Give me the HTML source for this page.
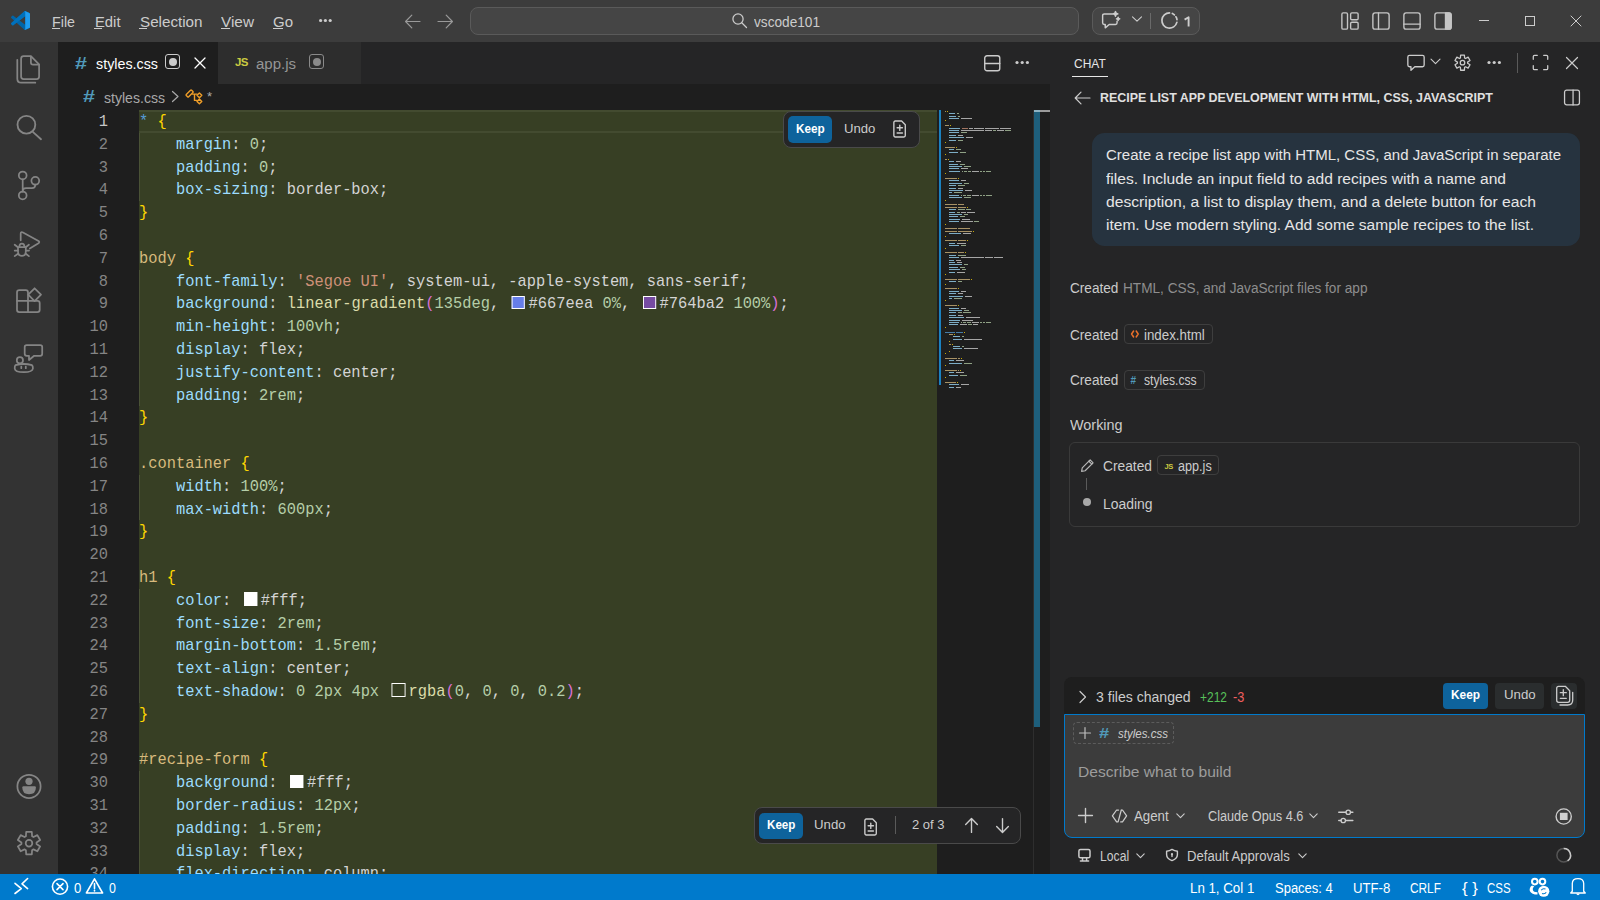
<!DOCTYPE html><html><head><meta charset="utf-8"><style>
*{margin:0;padding:0;box-sizing:border-box}
html,body{width:1600px;height:900px;overflow:hidden;background:#1e1e1e;font-family:"Liberation Sans", sans-serif;color:#cccccc}
.a{position:absolute}
.t{position:absolute;white-space:pre;line-height:1}
svg{position:absolute;overflow:visible}
.code{position:absolute;left:139px;white-space:pre;font-family:"Liberation Mono", monospace;font-size:16.4px;line-height:22.8px;height:22.8px;color:#d4d4d4;transform:scaleX(0.9386);transform-origin:0 0}
.ln{position:absolute;left:58px;width:50px;text-align:right;font-family:"Liberation Mono", monospace;font-size:16.4px;line-height:22.8px;color:#858585;transform:scaleX(0.9386);transform-origin:100% 0}
.sw{display:inline-block;width:14.28px;height:13.6px;margin:0 3.62px;border:1.5px solid #fff;border-left-width:1.6px;border-right-width:1.6px;vertical-align:top;position:relative;top:2.6px}
.p{color:#9cdcfe}.n{color:#b5cea8}.s{color:#ce9178}.sel{color:#d7ba7d}.b1{color:#ffd700}.b2{color:#da70d6}.f{color:#dcdcaa}.kw{color:#569cd6}.at{color:#c586c0}
</style></head><body>

<div class="a" style="left:0;top:0;width:1600px;height:42px;background:#3c3c3c"></div>
<svg style="left:11px;top:11px" width="19" height="19" viewBox="0 0 100 100">
<path fill="#0065A9" d="M96.46 10.8 75.86.9a6.23 6.23 0 0 0-7.1 1.2L29.36 38.05 12.19 25.01a4.16 4.16 0 0 0-5.32.24L1.36 30.26a4.16 4.16 0 0 0 0 6.16L16.25 50 1.36 63.58a4.16 4.16 0 0 0 0 6.16l5.51 5.01a4.16 4.16 0 0 0 5.32.24l17.17-13.04 39.4 35.95a6.23 6.23 0 0 0 7.1 1.2l20.6-9.9A6.24 6.24 0 0 0 100 83.6V16.42a6.24 6.24 0 0 0-3.54-5.62ZM75.02 72.7 45.11 50l29.91-22.7v45.4Z"/>
<path fill="#007ACC" d="M96.46 10.8 75.86.9a6.23 6.23 0 0 0-7.1 1.2L1.36 63.58a4.16 4.16 0 0 0 0 6.16l5.51 5.01a4.16 4.16 0 0 0 5.32.24L93.33 13.4C96.03 11.34 100 13.27 100 16.65v-.24a6.24 6.24 0 0 0-3.54-5.61Z" opacity=".6"/>
<path fill="#1F9CF0" d="M75.86 99.1a6.24 6.24 0 0 1-7.1-1.2C71.07 100.2 75 98.56 75 95.3V4.7c0-3.26-3.93-4.89-6.24-2.59a6.23 6.23 0 0 1 7.1-1.2l20.6 9.9A6.24 6.24 0 0 1 100 16.42v67.17a6.24 6.24 0 0 1-3.54 5.62l-20.6 9.9Z"/>
</svg>
<div class="t" style="left:52px;top:14.02px;font-size:15.1px;color:#cccccc;font-weight:normal;font-style:normal;font-family:'Liberation Sans', sans-serif;letter-spacing:0px;transform:scaleX(0.9454);transform-origin:0 0;">File</div>
<div class="t" style="left:94.5px;top:14.02px;font-size:15.1px;color:#cccccc;font-weight:normal;font-style:normal;font-family:'Liberation Sans', sans-serif;letter-spacing:0px;transform:scaleX(0.9802);transform-origin:0 0;">Edit</div>
<div class="t" style="left:139.5px;top:14.02px;font-size:15.1px;color:#cccccc;font-weight:normal;font-style:normal;font-family:'Liberation Sans', sans-serif;letter-spacing:0px;transform:scaleX(1.0065);transform-origin:0 0;">Selection</div>
<div class="t" style="left:221px;top:14.02px;font-size:15.1px;color:#cccccc;font-weight:normal;font-style:normal;font-family:'Liberation Sans', sans-serif;letter-spacing:0px;transform:scaleX(1.0169);transform-origin:0 0;">View</div>
<div class="t" style="left:273px;top:14.02px;font-size:15.1px;color:#cccccc;font-weight:normal;font-style:normal;font-family:'Liberation Sans', sans-serif;letter-spacing:0px;transform:scaleX(0.9930);transform-origin:0 0;">Go</div>
<div class="a" style="left:52px;top:28px;width:8px;height:1px;background:#cccccc;"></div>
<div class="a" style="left:94px;top:28px;width:8px;height:1px;background:#cccccc;"></div>
<div class="a" style="left:139px;top:28px;width:8px;height:1px;background:#cccccc;"></div>
<div class="a" style="left:221px;top:28px;width:9px;height:1px;background:#cccccc;"></div>
<div class="a" style="left:273px;top:28px;width:10px;height:1px;background:#cccccc;"></div>
<svg style="left:0;top:0" width="1" height="1"><circle cx="320.6" cy="20.5" r="1.6" fill="#cccccc"/><circle cx="325.4" cy="20.5" r="1.6" fill="#cccccc"/><circle cx="330.2" cy="20.5" r="1.6" fill="#cccccc"/></svg>
<svg style="left:404px;top:13px;" width="18" height="17" viewBox="0 0 18 17" fill="none" stroke="#9a9a9a" stroke-width="1.2" stroke-linecap="round" stroke-linejoin="round"><path d="M16 8.5H2M7.8 2.2 1.6 8.5 7.8 14.8"/></svg>
<svg style="left:436px;top:13px;" width="18" height="17" viewBox="0 0 18 17" fill="none" stroke="#9a9a9a" stroke-width="1.2" stroke-linecap="round" stroke-linejoin="round"><path d="M2 8.5H16M10.2 2.2 16.4 8.5 10.2 14.8"/></svg>
<div class="a" style="left:470px;top:7px;width:609px;height:28px;background:#454545;border:1px solid #5a5a5a;border-radius:8px"></div>
<svg style="left:731px;top:12px;" width="17" height="17" viewBox="0 0 16 16" fill="none" stroke="#cccccc" stroke-width="1.2" stroke-linecap="round" stroke-linejoin="round"><circle cx="6.6" cy="6.6" r="4.8"/><path d="M10.1 10.1 14.6 14.6"/></svg>
<div class="t" style="left:754px;top:14.95px;font-size:14.0px;color:#cccccc;font-weight:normal;font-style:normal;font-family:'Liberation Sans', sans-serif;letter-spacing:0px;transform:scaleX(0.9746);transform-origin:0 0;">vscode101</div>
<div class="a" style="left:1092px;top:7px;width:108px;height:28px;background:#454545;border:1px solid #5a5a5a;border-radius:8px"></div>
<svg style="left:1100px;top:10px;" width="21" height="21" viewBox="0 0 16 16" fill="none" stroke="#cccccc" stroke-width="1.1" stroke-linecap="round" stroke-linejoin="round"><path d="M9.5 3H3.2C2.5 3 2 3.5 2 4.2v5.6c0 .7.5 1.2 1.2 1.2H4v2.6L7 11h4.8c.7 0 1.2-.5 1.2-1.2V8.5"/><path d="M11.8 1.2l.5 1.3 1.3.5-1.3.5-.5 1.3-.5-1.3-1.3-.5 1.3-.5z" fill="#cccccc"/><path d="M13.8 5.5l.35.9.9.35-.9.35-.35.9-.35-.9-.9-.35.9-.35z" fill="#cccccc"/></svg>
<svg style="left:1131px;top:15px;" width="12" height="8" viewBox="0 0 12 8" fill="none" stroke="#cccccc" stroke-width="1.1" stroke-linecap="round" stroke-linejoin="round"><path d="M1.5 1.8 6 6.2l4.5-4.4"/></svg>
<div class="a" style="left:1150px;top:13px;width:1px;height:16px;background:#6a6a6a;"></div>
<svg style="left:1160px;top:11px;" width="19" height="19" viewBox="0 0 16 16" fill="none" stroke="#cccccc" stroke-width="1.45" stroke-linecap="round" stroke-linejoin="round"><path d="M8 1.6A6.4 6.4 0 1 0 14.2 9.6"/><path d="M10.4 2.1a6.4 6.4 0 0 1 1.7 1.1M13.4 4.9c.5.7.8 1.5.9 2.3"/></svg>
<svg style="left:1180px;top:10px" width="14" height="22"><path d="M4.6 9.6 8.6 7.2V16.4" fill="none" stroke="#cccccc" stroke-width="1.9" stroke-linejoin="round"/></svg>
<svg style="left:1340px;top:11px;" width="20" height="20" viewBox="0 0 16 16" fill="none" stroke="#c5c5c5" stroke-width="1.1" stroke-linecap="round" stroke-linejoin="round"><rect x="1.5" y="1.5" width="4.5" height="13" rx="1"/><rect x="8.5" y="1.5" width="6" height="5.5" rx="1"/><rect x="8.5" y="9" width="6" height="5.5" rx="1"/></svg>
<svg style="left:1371px;top:11px;" width="20" height="20" viewBox="0 0 16 16" fill="none" stroke="#c5c5c5" stroke-width="1.1" stroke-linecap="round" stroke-linejoin="round"><rect x="1.5" y="1.5" width="13" height="13" rx="1.8"/><path d="M6 1.5v13"/></svg>
<svg style="left:1402px;top:11px;" width="20" height="20" viewBox="0 0 16 16" fill="none" stroke="#c5c5c5" stroke-width="1.1" stroke-linecap="round" stroke-linejoin="round"><rect x="1.5" y="1.5" width="13" height="13" rx="1.8"/><path d="M1.5 10.5h13"/></svg>
<svg style="left:1433px;top:11px;" width="20" height="20" viewBox="0 0 16 16" fill="none" stroke="#c5c5c5" stroke-width="1.1" stroke-linecap="round" stroke-linejoin="round"><rect x="1.5" y="1.5" width="13" height="13" rx="1.8"/><path d="M10 1.5h2.7c1 0 1.8.8 1.8 1.8v9.4c0 1-.8 1.8-1.8 1.8H10z" fill="#c5c5c5"/></svg>
<div class="a" style="left:1479px;top:20px;width:10px;height:1px;background:#cccccc;"></div>
<div class="a" style="left:1525px;top:16px;width:10px;height:10px;background:transparent;border:1px solid #cccccc"></div>
<svg style="left:1571px;top:16px;" width="10" height="10" viewBox="0 0 10 10" fill="none" stroke="#cccccc" stroke-width="1.0" stroke-linecap="round" stroke-linejoin="round"><path d="M0 0 10 10M10 0 0 10"/></svg>
<div class="a" style="left:0px;top:42px;width:58px;height:832px;background:#333333;"></div>
<svg style="left:10px;top:50px;" width="40" height="40" viewBox="0 0 40 40" fill="none" stroke="#858585" stroke-width="1.75" stroke-linecap="round" stroke-linejoin="round"><path d="M13.6 6.2H20.9L29.1 14.4V26.6Q29.1 29.1 26.6 29.1H13.6Q11.1 29.1 11.1 26.6V8.7Q11.1 6.2 13.6 6.2Z"/><path d="M20.9 6.5V12.4Q20.9 14.5 23 14.5H28.8"/><path d="M7.3 9.8V28.7Q7.3 32.7 11.3 32.7H25.3"/></svg>
<svg style="left:10px;top:108px;" width="40" height="40" viewBox="0 0 40 40" fill="none" stroke="#858585" stroke-width="1.85" stroke-linecap="round" stroke-linejoin="round"><circle cx="16.4" cy="16.7" r="8.9"/><path d="M23.1 24.1 31 31.2"/></svg>
<svg style="left:10px;top:165px;" width="40" height="40" viewBox="0 0 40 40" fill="none" stroke="#858585" stroke-width="1.75" stroke-linecap="round" stroke-linejoin="round"><circle cx="12.7" cy="10.4" r="3.9"/><circle cx="25.3" cy="15.8" r="3.9"/><circle cx="12.7" cy="30.4" r="3.9"/><path d="M12.7 14.3V26.5M25.3 19.7Q25.3 23.1 22 23.1H16Q12.7 23.1 12.7 26.4"/></svg>
<svg style="left:8px;top:223px;" width="40" height="40" viewBox="0 0 40 40" fill="none" stroke="#858585" stroke-width="1.75" stroke-linecap="round" stroke-linejoin="round"><path d="M12.7 17.3V10.8Q12.7 8.3 15 9.5L30.5 18Q32 19.1 30.5 20.2L21.8 25.6"/><path d="M10 24.2H17.8V28.5Q17.8 32.9 13.9 32.9Q10 32.9 10 28.5Z"/><path d="M11.4 23.8Q11.4 20.6 13.9 20.6Q16.4 20.6 16.4 23.8"/><path d="M6.7 21.8 9.6 24M20.9 21.8 18 24M6.7 27.6H9.8M17.9 27.6H21M6.7 33.1 10 30.7M20.9 33.1 17.8 30.7"/></svg>
<svg style="left:9px;top:280px;" width="40" height="40" viewBox="0 0 40 40" fill="none" stroke="#858585" stroke-width="1.75" stroke-linecap="round" stroke-linejoin="round"><path d="M8 12.5Q8 10.2 10.3 10.2H16.7Q19 10.2 19 12.5V20.9H28.4Q30.7 20.9 30.7 23.2V29.7Q30.7 32 28.4 32H10.3Q8 32 8 29.7Z"/><path d="M8 20.9H19V32"/><path d="M25.6 8.3 32 14.7 25.6 21.1 19.2 14.7Z"/></svg>
<svg style="left:8px;top:338px;" width="40" height="40" viewBox="0 0 40 40" fill="none" stroke="#858585" stroke-width="1.75" stroke-linecap="round" stroke-linejoin="round"><path d="M18.7 7.1H32.2Q34.2 7.1 34.2 9.1V15.8Q34.2 17.8 32.2 17.8H26.2L21 22V17.8H18.7Q16.7 17.8 16.7 15.8V9.1Q16.7 7.1 18.7 7.1Z"/><circle cx="11.9" cy="22.2" r="3.1"/><path d="M7.5 27.2Q15.8 24.8 24 27.2Q25 28 24.9 30.5Q24.5 34.2 15.8 34.2Q7 34.2 6.7 30.5Q6.6 28 7.5 27.2Z"/><path d="M13.3 28.6V30.2M17.8 28.6V30.2"/></svg>
<svg style="left:9px;top:766px;" width="40" height="40" viewBox="0 0 40 40" fill="none" stroke="#858585" stroke-width="1.75" stroke-linecap="round" stroke-linejoin="round"><circle cx="20" cy="20.4" r="11.6"/><circle cx="20" cy="15.3" r="3.6" fill="#858585" stroke="none"/><path d="M13.3 21.5Q13.3 20.2 14.6 20.2H25.6Q26.9 20.2 26.9 21.5Q26.9 28.2 20.1 28.2Q13.3 28.2 13.3 21.5Z" fill="#858585" stroke="none"/></svg>
<svg style="left:9px;top:823px;" width="40" height="40" viewBox="0 0 40 40" fill="none" stroke="#858585" stroke-width="1.75" stroke-linecap="round" stroke-linejoin="round"><path d="M16.91 13.26 L17.19 8.94 L22.81 8.94 L23.09 13.26 L24.47 14.05 L28.34 12.14 L31.15 17.00 L27.56 19.41 L27.56 20.99 L31.15 23.40 L28.34 28.26 L24.47 26.35 L23.09 27.14 L22.81 31.46 L17.19 31.46 L16.91 27.14 L15.53 26.35 L11.66 28.26 L8.85 23.40 L12.44 20.99 L12.44 19.41 L8.85 17.00 L11.66 12.14 L15.53 14.05Z"/><circle cx="20" cy="20.2" r="3.3"/></svg>
<div class="a" style="left:58px;top:42px;width:992px;height:42px;background:#252526;"></div>
<div class="a" style="left:58px;top:42px;width:160px;height:42px;background:#1e1e1e;"></div>
<div class="a" style="left:218px;top:42px;width:143px;height:42px;background:#2d2d2d;"></div>
<div class="t" style="left:74.5px;top:54.53px;font-size:16.5px;color:#519aba;font-weight:bold;font-style:normal;font-family:'Liberation Sans', sans-serif;letter-spacing:0px;transform:scaleX(1.3061);transform-origin:0 0;">#</div>
<div class="t" style="left:96px;top:56.22px;font-size:15.1px;color:#ffffff;font-weight:normal;font-style:normal;font-family:'Liberation Sans', sans-serif;letter-spacing:0px;transform:scaleX(0.9477);transform-origin:0 0;">styles.css</div>
<div class="a" style="left:165px;top:54px;width:15px;height:15px;background:transparent;border:1.3px solid #cccccc;border-radius:3px"></div>
<div class="a" style="left:168.5px;top:57.5px;width:8px;height:8px;background:#cccccc;border-radius:50%"></div>
<svg style="left:194px;top:57px;" width="12" height="12" viewBox="0 0 12 12" fill="none" stroke="#ffffff" stroke-width="1.3" stroke-linecap="round" stroke-linejoin="round"><path d="M1 1 11 11M11 1 1 11"/></svg>
<div class="t" style="left:235px;top:56.77px;font-size:11.5px;color:#cbcb41;font-weight:bold;font-style:normal;font-family:'Liberation Sans', sans-serif;letter-spacing:-0.6px;">JS</div>
<div class="t" style="left:256px;top:56.22px;font-size:15.1px;color:#969696;font-weight:normal;font-style:normal;font-family:'Liberation Sans', sans-serif;letter-spacing:0px;transform:scaleX(0.9930);transform-origin:0 0;">app.js</div>
<div class="a" style="left:309px;top:54px;width:15px;height:15px;background:transparent;border:1.3px solid #8a8a8a;border-radius:3px"></div>
<div class="a" style="left:312.5px;top:57.5px;width:8px;height:8px;background:#8a8a8a;border-radius:50%"></div>
<svg style="left:982.5px;top:53.5px;" width="18.5" height="18.5" viewBox="0 0 16 16" fill="none" stroke="#cccccc" stroke-width="1.2" stroke-linecap="round" stroke-linejoin="round"><rect x="1.5" y="1.5" width="13" height="13" rx="2"/><path d="M1.5 8.2h13"/></svg>
<svg style="left:0;top:0" width="1" height="1"><circle cx="1017" cy="62.5" r="1.6" fill="#cccccc"/><circle cx="1022.2" cy="62.5" r="1.6" fill="#cccccc"/><circle cx="1027.4" cy="62.5" r="1.6" fill="#cccccc"/></svg>
<div class="t" style="left:82.5px;top:88.23px;font-size:16.5px;color:#519aba;font-weight:bold;font-style:normal;font-family:'Liberation Sans', sans-serif;letter-spacing:0px;transform:scaleX(1.3061);transform-origin:0 0;">#</div>
<div class="t" style="left:103.6px;top:89.92px;font-size:15.1px;color:#a9a9a9;font-weight:normal;font-style:normal;font-family:'Liberation Sans', sans-serif;letter-spacing:0px;transform:scaleX(0.9324);transform-origin:0 0;">styles.css</div>
<svg style="left:171px;top:90px;" width="9" height="13" viewBox="0 0 9 13" fill="none" stroke="#a9a9a9" stroke-width="1.2" stroke-linecap="round" stroke-linejoin="round"><path d="M1.5 1.5 7 6.5 1.5 11.5"/></svg>
<svg style="left:182px;top:86px;" width="34" height="22" viewBox="0 0 34 22" fill="none" stroke="#ee9d28" stroke-width="1.4" stroke-linecap="round" stroke-linejoin="round"><rect x="-3.8" y="-1.7" width="7.6" height="3.4" rx="0.8" transform="translate(7.6 7.5) rotate(-45)"/><path d="M10.4 8.1H15M12.5 8.1V14.4H15"/><path d="M17.4 6.9 19.8 9.3 17.4 11.7 15 9.3Z"/><path d="M17.4 13 19.8 15.4 17.4 17.8 15 15.4Z"/></svg>
<div class="t" style="left:207px;top:90.00px;font-size:13px;color:#a9a9a9;font-weight:normal;font-style:normal;font-family:'Liberation Sans', sans-serif;letter-spacing:0px;">*</div>
<div class="a" style="left:139px;top:110px;width:798px;height:764px;background:#373f24;"></div>
<div class="a" style="left:139px;top:110px;width:798px;height:2px;background:#434b30;"></div>
<div class="a" style="left:139px;top:130.8px;width:798px;height:2px;background:#434b30;"></div>
<div class="ln" style="top:110.90px;color:#c6c6c6">1</div>
<div class="code" style="top:110.90px"><span class="kw">*</span> <span class="b1">{</span></div>
<div class="ln" style="top:133.70px;">2</div>
<div class="code" style="top:133.70px">    <span class="p">margin</span>: <span class="n">0</span>;</div>
<div class="a" style="left:139px;top:132.8px;width:1px;height:22.8px;background:#4a5236;"></div>
<div class="ln" style="top:156.50px;">3</div>
<div class="code" style="top:156.50px">    <span class="p">padding</span>: <span class="n">0</span>;</div>
<div class="a" style="left:139px;top:155.6px;width:1px;height:22.8px;background:#4a5236;"></div>
<div class="ln" style="top:179.30px;">4</div>
<div class="code" style="top:179.30px">    <span class="p">box-sizing</span>: border-box;</div>
<div class="a" style="left:139px;top:178.4px;width:1px;height:22.8px;background:#4a5236;"></div>
<div class="ln" style="top:202.10px;">5</div>
<div class="code" style="top:202.10px"><span class="b1">}</span></div>
<div class="ln" style="top:224.90px;">6</div>
<div class="code" style="top:224.90px"></div>
<div class="ln" style="top:247.70px;">7</div>
<div class="code" style="top:247.70px"><span class="sel">body</span> <span class="b1">{</span></div>
<div class="ln" style="top:270.50px;">8</div>
<div class="code" style="top:270.50px">    <span class="p">font-family</span>: <span class="s">'Segoe UI'</span>, system-ui, -apple-system, sans-serif;</div>
<div class="a" style="left:139px;top:269.6px;width:1px;height:22.8px;background:#4a5236;"></div>
<div class="ln" style="top:293.30px;">9</div>
<div class="code" style="top:293.30px">    <span class="p">background</span>: <span class="f">linear-gradient</span><span class="b2">(</span><span class="n">135deg</span>, <span class="sw" style="background:#667eea"></span>#667eea <span class="n">0%</span>, <span class="sw" style="background:#764ba2"></span>#764ba2 <span class="n">100%</span><span class="b2">)</span>;</div>
<div class="a" style="left:139px;top:292.4px;width:1px;height:22.8px;background:#4a5236;"></div>
<div class="ln" style="top:316.10px;">10</div>
<div class="code" style="top:316.10px">    <span class="p">min-height</span>: <span class="n">100vh</span>;</div>
<div class="a" style="left:139px;top:315.20000000000005px;width:1px;height:22.8px;background:#4a5236;"></div>
<div class="ln" style="top:338.90px;">11</div>
<div class="code" style="top:338.90px">    <span class="p">display</span>: flex;</div>
<div class="a" style="left:139px;top:338.0px;width:1px;height:22.8px;background:#4a5236;"></div>
<div class="ln" style="top:361.70px;">12</div>
<div class="code" style="top:361.70px">    <span class="p">justify-content</span>: center;</div>
<div class="a" style="left:139px;top:360.8px;width:1px;height:22.8px;background:#4a5236;"></div>
<div class="ln" style="top:384.50px;">13</div>
<div class="code" style="top:384.50px">    <span class="p">padding</span>: <span class="n">2rem</span>;</div>
<div class="a" style="left:139px;top:383.6px;width:1px;height:22.8px;background:#4a5236;"></div>
<div class="ln" style="top:407.30px;">14</div>
<div class="code" style="top:407.30px"><span class="b1">}</span></div>
<div class="ln" style="top:430.10px;">15</div>
<div class="code" style="top:430.10px"></div>
<div class="ln" style="top:452.90px;">16</div>
<div class="code" style="top:452.90px"><span class="sel">.container</span> <span class="b1">{</span></div>
<div class="ln" style="top:475.70px;">17</div>
<div class="code" style="top:475.70px">    <span class="p">width</span>: <span class="n">100%</span>;</div>
<div class="a" style="left:139px;top:474.8px;width:1px;height:22.8px;background:#4a5236;"></div>
<div class="ln" style="top:498.50px;">18</div>
<div class="code" style="top:498.50px">    <span class="p">max-width</span>: <span class="n">600px</span>;</div>
<div class="a" style="left:139px;top:497.6px;width:1px;height:22.8px;background:#4a5236;"></div>
<div class="ln" style="top:521.30px;">19</div>
<div class="code" style="top:521.30px"><span class="b1">}</span></div>
<div class="ln" style="top:544.10px;">20</div>
<div class="code" style="top:544.10px"></div>
<div class="ln" style="top:566.90px;">21</div>
<div class="code" style="top:566.90px"><span class="sel">h1</span> <span class="b1">{</span></div>
<div class="ln" style="top:589.70px;">22</div>
<div class="code" style="top:589.70px">    <span class="p">color</span>: <span class="sw" style="background:#ffffff"></span>#fff;</div>
<div class="a" style="left:139px;top:588.8px;width:1px;height:22.8px;background:#4a5236;"></div>
<div class="ln" style="top:612.50px;">23</div>
<div class="code" style="top:612.50px">    <span class="p">font-size</span>: <span class="n">2rem</span>;</div>
<div class="a" style="left:139px;top:611.6px;width:1px;height:22.8px;background:#4a5236;"></div>
<div class="ln" style="top:635.30px;">24</div>
<div class="code" style="top:635.30px">    <span class="p">margin-bottom</span>: <span class="n">1.5rem</span>;</div>
<div class="a" style="left:139px;top:634.4px;width:1px;height:22.8px;background:#4a5236;"></div>
<div class="ln" style="top:658.10px;">25</div>
<div class="code" style="top:658.10px">    <span class="p">text-align</span>: center;</div>
<div class="a" style="left:139px;top:657.2px;width:1px;height:22.8px;background:#4a5236;"></div>
<div class="ln" style="top:680.90px;">26</div>
<div class="code" style="top:680.90px">    <span class="p">text-shadow</span>: <span class="n">0</span> <span class="n">2px</span> <span class="n">4px</span> <span class="sw" style="background:transparent"></span><span class="f">rgba</span><span class="b2">(</span><span class="n">0</span>, <span class="n">0</span>, <span class="n">0</span>, <span class="n">0.2</span><span class="b2">)</span>;</div>
<div class="a" style="left:139px;top:680.0px;width:1px;height:22.8px;background:#4a5236;"></div>
<div class="ln" style="top:703.70px;">27</div>
<div class="code" style="top:703.70px"><span class="b1">}</span></div>
<div class="ln" style="top:726.50px;">28</div>
<div class="code" style="top:726.50px"></div>
<div class="ln" style="top:749.30px;">29</div>
<div class="code" style="top:749.30px"><span class="sel">#recipe-form</span> <span class="b1">{</span></div>
<div class="ln" style="top:772.10px;">30</div>
<div class="code" style="top:772.10px">    <span class="p">background</span>: <span class="sw" style="background:#ffffff"></span>#fff;</div>
<div class="a" style="left:139px;top:771.2px;width:1px;height:22.8px;background:#4a5236;"></div>
<div class="ln" style="top:794.90px;">31</div>
<div class="code" style="top:794.90px">    <span class="p">border-radius</span>: <span class="n">12px</span>;</div>
<div class="a" style="left:139px;top:794.0px;width:1px;height:22.8px;background:#4a5236;"></div>
<div class="ln" style="top:817.70px;">32</div>
<div class="code" style="top:817.70px">    <span class="p">padding</span>: <span class="n">1.5rem</span>;</div>
<div class="a" style="left:139px;top:816.8000000000001px;width:1px;height:22.8px;background:#4a5236;"></div>
<div class="ln" style="top:840.50px;">33</div>
<div class="code" style="top:840.50px">    <span class="p">display</span>: flex;</div>
<div class="a" style="left:139px;top:839.6px;width:1px;height:22.8px;background:#4a5236;"></div>
<div class="ln" style="top:863.30px;">34</div>
<div class="code" style="top:863.30px">    <span class="p">flex-direction</span>: column;</div>
<div class="a" style="left:139px;top:862.4px;width:1px;height:22.8px;background:#4a5236;"></div>
<div class="a" style="left:937px;top:110px;width:97px;height:764px;background:#1e1e1e;"></div>
<div class="a" style="left:945px;top:111px;width:1px;height:1.4px;background:#d7ba7d;opacity:.75"></div><div class="a" style="left:947px;top:111px;width:1px;height:1.4px;background:#ffd700;opacity:.75"></div><div class="a" style="left:949px;top:113px;width:6px;height:1.4px;background:#9cdcfe;opacity:.75"></div><div class="a" style="left:957px;top:113px;width:2px;height:1.4px;background:#b5cea8;opacity:.75"></div><div class="a" style="left:949px;top:116px;width:7px;height:1.4px;background:#9cdcfe;opacity:.75"></div><div class="a" style="left:958px;top:116px;width:2px;height:1.4px;background:#b5cea8;opacity:.75"></div><div class="a" style="left:949px;top:118px;width:10px;height:1.4px;background:#9cdcfe;opacity:.75"></div><div class="a" style="left:961px;top:118px;width:11px;height:1.4px;background:#d4d4d4;opacity:.75"></div><div class="a" style="left:945px;top:120px;width:1px;height:1.4px;background:#ffd700;opacity:.75"></div><div class="a" style="left:945px;top:125px;width:4px;height:1.4px;background:#d7ba7d;opacity:.75"></div><div class="a" style="left:950px;top:125px;width:1px;height:1.4px;background:#ffd700;opacity:.75"></div><div class="a" style="left:949px;top:128px;width:11px;height:1.4px;background:#9cdcfe;opacity:.75"></div><div class="a" style="left:962px;top:128px;width:6px;height:1.4px;background:#ce9178;opacity:.75"></div><div class="a" style="left:969px;top:128px;width:4px;height:1.4px;background:#d4d4d4;opacity:.75"></div><div class="a" style="left:974px;top:128px;width:10px;height:1.4px;background:#d4d4d4;opacity:.75"></div><div class="a" style="left:985px;top:128px;width:14px;height:1.4px;background:#d4d4d4;opacity:.75"></div><div class="a" style="left:1000px;top:128px;width:11px;height:1.4px;background:#d4d4d4;opacity:.75"></div><div class="a" style="left:949px;top:130px;width:10px;height:1.4px;background:#9cdcfe;opacity:.75"></div><div class="a" style="left:961px;top:130px;width:23px;height:1.4px;background:#d4d4d4;opacity:.75"></div><div class="a" style="left:985px;top:130px;width:7px;height:1.4px;background:#d4d4d4;opacity:.75"></div><div class="a" style="left:993px;top:130px;width:3px;height:1.4px;background:#b5cea8;opacity:.75"></div><div class="a" style="left:997px;top:130px;width:7px;height:1.4px;background:#d4d4d4;opacity:.75"></div><div class="a" style="left:1005px;top:130px;width:6px;height:1.4px;background:#b5cea8;opacity:.75"></div><div class="a" style="left:949px;top:132px;width:10px;height:1.4px;background:#9cdcfe;opacity:.75"></div><div class="a" style="left:961px;top:132px;width:6px;height:1.4px;background:#b5cea8;opacity:.75"></div><div class="a" style="left:949px;top:135px;width:7px;height:1.4px;background:#9cdcfe;opacity:.75"></div><div class="a" style="left:958px;top:135px;width:5px;height:1.4px;background:#d4d4d4;opacity:.75"></div><div class="a" style="left:949px;top:137px;width:15px;height:1.4px;background:#9cdcfe;opacity:.75"></div><div class="a" style="left:966px;top:137px;width:7px;height:1.4px;background:#d4d4d4;opacity:.75"></div><div class="a" style="left:949px;top:140px;width:7px;height:1.4px;background:#9cdcfe;opacity:.75"></div><div class="a" style="left:958px;top:140px;width:5px;height:1.4px;background:#b5cea8;opacity:.75"></div><div class="a" style="left:945px;top:142px;width:1px;height:1.4px;background:#ffd700;opacity:.75"></div><div class="a" style="left:945px;top:147px;width:10px;height:1.4px;background:#d7ba7d;opacity:.75"></div><div class="a" style="left:956px;top:147px;width:1px;height:1.4px;background:#ffd700;opacity:.75"></div><div class="a" style="left:949px;top:149px;width:5px;height:1.4px;background:#9cdcfe;opacity:.75"></div><div class="a" style="left:956px;top:149px;width:5px;height:1.4px;background:#b5cea8;opacity:.75"></div><div class="a" style="left:949px;top:152px;width:9px;height:1.4px;background:#9cdcfe;opacity:.75"></div><div class="a" style="left:960px;top:152px;width:6px;height:1.4px;background:#b5cea8;opacity:.75"></div><div class="a" style="left:945px;top:154px;width:1px;height:1.4px;background:#ffd700;opacity:.75"></div><div class="a" style="left:945px;top:159px;width:2px;height:1.4px;background:#d7ba7d;opacity:.75"></div><div class="a" style="left:948px;top:159px;width:1px;height:1.4px;background:#ffd700;opacity:.75"></div><div class="a" style="left:949px;top:161px;width:5px;height:1.4px;background:#9cdcfe;opacity:.75"></div><div class="a" style="left:956px;top:161px;width:5px;height:1.4px;background:#d4d4d4;opacity:.75"></div><div class="a" style="left:949px;top:164px;width:9px;height:1.4px;background:#9cdcfe;opacity:.75"></div><div class="a" style="left:960px;top:164px;width:5px;height:1.4px;background:#b5cea8;opacity:.75"></div><div class="a" style="left:949px;top:166px;width:13px;height:1.4px;background:#9cdcfe;opacity:.75"></div><div class="a" style="left:964px;top:166px;width:7px;height:1.4px;background:#b5cea8;opacity:.75"></div><div class="a" style="left:949px;top:168px;width:10px;height:1.4px;background:#9cdcfe;opacity:.75"></div><div class="a" style="left:961px;top:168px;width:7px;height:1.4px;background:#d4d4d4;opacity:.75"></div><div class="a" style="left:949px;top:171px;width:11px;height:1.4px;background:#9cdcfe;opacity:.75"></div><div class="a" style="left:962px;top:171px;width:1px;height:1.4px;background:#b5cea8;opacity:.75"></div><div class="a" style="left:964px;top:171px;width:3px;height:1.4px;background:#b5cea8;opacity:.75"></div><div class="a" style="left:968px;top:171px;width:3px;height:1.4px;background:#b5cea8;opacity:.75"></div><div class="a" style="left:972px;top:171px;width:7px;height:1.4px;background:#d4d4d4;opacity:.75"></div><div class="a" style="left:980px;top:171px;width:2px;height:1.4px;background:#b5cea8;opacity:.75"></div><div class="a" style="left:983px;top:171px;width:2px;height:1.4px;background:#b5cea8;opacity:.75"></div><div class="a" style="left:986px;top:171px;width:5px;height:1.4px;background:#b5cea8;opacity:.75"></div><div class="a" style="left:945px;top:173px;width:1px;height:1.4px;background:#ffd700;opacity:.75"></div><div class="a" style="left:945px;top:178px;width:12px;height:1.4px;background:#d7ba7d;opacity:.75"></div><div class="a" style="left:958px;top:178px;width:1px;height:1.4px;background:#ffd700;opacity:.75"></div><div class="a" style="left:949px;top:180px;width:10px;height:1.4px;background:#9cdcfe;opacity:.75"></div><div class="a" style="left:961px;top:180px;width:5px;height:1.4px;background:#d4d4d4;opacity:.75"></div><div class="a" style="left:949px;top:183px;width:13px;height:1.4px;background:#9cdcfe;opacity:.75"></div><div class="a" style="left:964px;top:183px;width:5px;height:1.4px;background:#b5cea8;opacity:.75"></div><div class="a" style="left:949px;top:185px;width:7px;height:1.4px;background:#9cdcfe;opacity:.75"></div><div class="a" style="left:958px;top:185px;width:7px;height:1.4px;background:#b5cea8;opacity:.75"></div><div class="a" style="left:949px;top:188px;width:7px;height:1.4px;background:#9cdcfe;opacity:.75"></div><div class="a" style="left:958px;top:188px;width:5px;height:1.4px;background:#d4d4d4;opacity:.75"></div><div class="a" style="left:949px;top:190px;width:14px;height:1.4px;background:#9cdcfe;opacity:.75"></div><div class="a" style="left:965px;top:190px;width:7px;height:1.4px;background:#d4d4d4;opacity:.75"></div><div class="a" style="left:949px;top:192px;width:3px;height:1.4px;background:#9cdcfe;opacity:.75"></div><div class="a" style="left:954px;top:192px;width:8px;height:1.4px;background:#b5cea8;opacity:.75"></div><div class="a" style="left:949px;top:195px;width:10px;height:1.4px;background:#9cdcfe;opacity:.75"></div><div class="a" style="left:961px;top:195px;width:1px;height:1.4px;background:#b5cea8;opacity:.75"></div><div class="a" style="left:963px;top:195px;width:3px;height:1.4px;background:#b5cea8;opacity:.75"></div><div class="a" style="left:967px;top:195px;width:4px;height:1.4px;background:#b5cea8;opacity:.75"></div><div class="a" style="left:972px;top:195px;width:7px;height:1.4px;background:#d4d4d4;opacity:.75"></div><div class="a" style="left:980px;top:195px;width:2px;height:1.4px;background:#b5cea8;opacity:.75"></div><div class="a" style="left:983px;top:195px;width:2px;height:1.4px;background:#b5cea8;opacity:.75"></div><div class="a" style="left:986px;top:195px;width:6px;height:1.4px;background:#b5cea8;opacity:.75"></div><div class="a" style="left:949px;top:197px;width:13px;height:1.4px;background:#9cdcfe;opacity:.75"></div><div class="a" style="left:964px;top:197px;width:7px;height:1.4px;background:#b5cea8;opacity:.75"></div><div class="a" style="left:945px;top:200px;width:1px;height:1.4px;background:#ffd700;opacity:.75"></div><div class="a" style="left:945px;top:204px;width:12px;height:1.4px;background:#d7ba7d;opacity:.75"></div><div class="a" style="left:958px;top:204px;width:6px;height:1.4px;background:#d7ba7d;opacity:.75"></div><div class="a" style="left:945px;top:207px;width:12px;height:1.4px;background:#d7ba7d;opacity:.75"></div><div class="a" style="left:958px;top:207px;width:8px;height:1.4px;background:#d7ba7d;opacity:.75"></div><div class="a" style="left:967px;top:207px;width:1px;height:1.4px;background:#ffd700;opacity:.75"></div><div class="a" style="left:949px;top:209px;width:7px;height:1.4px;background:#9cdcfe;opacity:.75"></div><div class="a" style="left:958px;top:209px;width:7px;height:1.4px;background:#b5cea8;opacity:.75"></div><div class="a" style="left:966px;top:209px;width:5px;height:1.4px;background:#b5cea8;opacity:.75"></div><div class="a" style="left:949px;top:212px;width:6px;height:1.4px;background:#9cdcfe;opacity:.75"></div><div class="a" style="left:957px;top:212px;width:3px;height:1.4px;background:#b5cea8;opacity:.75"></div><div class="a" style="left:961px;top:212px;width:5px;height:1.4px;background:#d4d4d4;opacity:.75"></div><div class="a" style="left:967px;top:212px;width:8px;height:1.4px;background:#d4d4d4;opacity:.75"></div><div class="a" style="left:949px;top:214px;width:13px;height:1.4px;background:#9cdcfe;opacity:.75"></div><div class="a" style="left:964px;top:214px;width:4px;height:1.4px;background:#b5cea8;opacity:.75"></div><div class="a" style="left:949px;top:216px;width:9px;height:1.4px;background:#9cdcfe;opacity:.75"></div><div class="a" style="left:960px;top:216px;width:5px;height:1.4px;background:#b5cea8;opacity:.75"></div><div class="a" style="left:949px;top:219px;width:11px;height:1.4px;background:#9cdcfe;opacity:.75"></div><div class="a" style="left:962px;top:219px;width:8px;height:1.4px;background:#d4d4d4;opacity:.75"></div><div class="a" style="left:949px;top:221px;width:10px;height:1.4px;background:#9cdcfe;opacity:.75"></div><div class="a" style="left:961px;top:221px;width:12px;height:1.4px;background:#d4d4d4;opacity:.75"></div><div class="a" style="left:974px;top:221px;width:5px;height:1.4px;background:#b5cea8;opacity:.75"></div><div class="a" style="left:945px;top:224px;width:1px;height:1.4px;background:#ffd700;opacity:.75"></div><div class="a" style="left:945px;top:228px;width:12px;height:1.4px;background:#d7ba7d;opacity:.75"></div><div class="a" style="left:958px;top:228px;width:12px;height:1.4px;background:#d7ba7d;opacity:.75"></div><div class="a" style="left:945px;top:231px;width:12px;height:1.4px;background:#d7ba7d;opacity:.75"></div><div class="a" style="left:958px;top:231px;width:14px;height:1.4px;background:#d7ba7d;opacity:.75"></div><div class="a" style="left:973px;top:231px;width:1px;height:1.4px;background:#ffd700;opacity:.75"></div><div class="a" style="left:949px;top:233px;width:12px;height:1.4px;background:#9cdcfe;opacity:.75"></div><div class="a" style="left:963px;top:233px;width:8px;height:1.4px;background:#d4d4d4;opacity:.75"></div><div class="a" style="left:945px;top:236px;width:1px;height:1.4px;background:#ffd700;opacity:.75"></div><div class="a" style="left:945px;top:240px;width:12px;height:1.4px;background:#d7ba7d;opacity:.75"></div><div class="a" style="left:958px;top:240px;width:8px;height:1.4px;background:#d7ba7d;opacity:.75"></div><div class="a" style="left:967px;top:240px;width:1px;height:1.4px;background:#ffd700;opacity:.75"></div><div class="a" style="left:949px;top:243px;width:6px;height:1.4px;background:#9cdcfe;opacity:.75"></div><div class="a" style="left:957px;top:243px;width:9px;height:1.4px;background:#d4d4d4;opacity:.75"></div><div class="a" style="left:949px;top:245px;width:10px;height:1.4px;background:#9cdcfe;opacity:.75"></div><div class="a" style="left:961px;top:245px;width:5px;height:1.4px;background:#b5cea8;opacity:.75"></div><div class="a" style="left:945px;top:248px;width:1px;height:1.4px;background:#ffd700;opacity:.75"></div><div class="a" style="left:945px;top:252px;width:12px;height:1.4px;background:#d7ba7d;opacity:.75"></div><div class="a" style="left:958px;top:252px;width:6px;height:1.4px;background:#d7ba7d;opacity:.75"></div><div class="a" style="left:965px;top:252px;width:1px;height:1.4px;background:#ffd700;opacity:.75"></div><div class="a" style="left:949px;top:255px;width:7px;height:1.4px;background:#9cdcfe;opacity:.75"></div><div class="a" style="left:958px;top:255px;width:8px;height:1.4px;background:#b5cea8;opacity:.75"></div><div class="a" style="left:949px;top:257px;width:10px;height:1.4px;background:#9cdcfe;opacity:.75"></div><div class="a" style="left:961px;top:257px;width:23px;height:1.4px;background:#d4d4d4;opacity:.75"></div><div class="a" style="left:985px;top:257px;width:8px;height:1.4px;background:#d4d4d4;opacity:.75"></div><div class="a" style="left:994px;top:257px;width:9px;height:1.4px;background:#d4d4d4;opacity:.75"></div><div class="a" style="left:949px;top:260px;width:5px;height:1.4px;background:#9cdcfe;opacity:.75"></div><div class="a" style="left:956px;top:260px;width:5px;height:1.4px;background:#d4d4d4;opacity:.75"></div><div class="a" style="left:949px;top:262px;width:6px;height:1.4px;background:#9cdcfe;opacity:.75"></div><div class="a" style="left:957px;top:262px;width:5px;height:1.4px;background:#d4d4d4;opacity:.75"></div><div class="a" style="left:949px;top:264px;width:13px;height:1.4px;background:#9cdcfe;opacity:.75"></div><div class="a" style="left:964px;top:264px;width:4px;height:1.4px;background:#b5cea8;opacity:.75"></div><div class="a" style="left:949px;top:267px;width:9px;height:1.4px;background:#9cdcfe;opacity:.75"></div><div class="a" style="left:960px;top:267px;width:5px;height:1.4px;background:#b5cea8;opacity:.75"></div><div class="a" style="left:949px;top:269px;width:11px;height:1.4px;background:#9cdcfe;opacity:.75"></div><div class="a" style="left:962px;top:269px;width:4px;height:1.4px;background:#b5cea8;opacity:.75"></div><div class="a" style="left:949px;top:272px;width:6px;height:1.4px;background:#9cdcfe;opacity:.75"></div><div class="a" style="left:957px;top:272px;width:8px;height:1.4px;background:#d4d4d4;opacity:.75"></div><div class="a" style="left:945px;top:274px;width:1px;height:1.4px;background:#ffd700;opacity:.75"></div><div class="a" style="left:945px;top:279px;width:12px;height:1.4px;background:#d7ba7d;opacity:.75"></div><div class="a" style="left:958px;top:279px;width:12px;height:1.4px;background:#d7ba7d;opacity:.75"></div><div class="a" style="left:971px;top:279px;width:1px;height:1.4px;background:#ffd700;opacity:.75"></div><div class="a" style="left:949px;top:281px;width:7px;height:1.4px;background:#9cdcfe;opacity:.75"></div><div class="a" style="left:958px;top:281px;width:4px;height:1.4px;background:#b5cea8;opacity:.75"></div><div class="a" style="left:945px;top:284px;width:1px;height:1.4px;background:#ffd700;opacity:.75"></div><div class="a" style="left:945px;top:288px;width:12px;height:1.4px;background:#d7ba7d;opacity:.75"></div><div class="a" style="left:958px;top:288px;width:1px;height:1.4px;background:#ffd700;opacity:.75"></div><div class="a" style="left:949px;top:291px;width:10px;height:1.4px;background:#9cdcfe;opacity:.75"></div><div class="a" style="left:961px;top:291px;width:5px;height:1.4px;background:#d4d4d4;opacity:.75"></div><div class="a" style="left:949px;top:293px;width:7px;height:1.4px;background:#9cdcfe;opacity:.75"></div><div class="a" style="left:958px;top:293px;width:5px;height:1.4px;background:#d4d4d4;opacity:.75"></div><div class="a" style="left:949px;top:296px;width:14px;height:1.4px;background:#9cdcfe;opacity:.75"></div><div class="a" style="left:965px;top:296px;width:7px;height:1.4px;background:#d4d4d4;opacity:.75"></div><div class="a" style="left:949px;top:298px;width:3px;height:1.4px;background:#9cdcfe;opacity:.75"></div><div class="a" style="left:954px;top:298px;width:8px;height:1.4px;background:#b5cea8;opacity:.75"></div><div class="a" style="left:945px;top:300px;width:1px;height:1.4px;background:#ffd700;opacity:.75"></div><div class="a" style="left:945px;top:305px;width:12px;height:1.4px;background:#d7ba7d;opacity:.75"></div><div class="a" style="left:958px;top:305px;width:1px;height:1.4px;background:#ffd700;opacity:.75"></div><div class="a" style="left:949px;top:308px;width:10px;height:1.4px;background:#9cdcfe;opacity:.75"></div><div class="a" style="left:961px;top:308px;width:5px;height:1.4px;background:#d4d4d4;opacity:.75"></div><div class="a" style="left:949px;top:310px;width:13px;height:1.4px;background:#9cdcfe;opacity:.75"></div><div class="a" style="left:964px;top:310px;width:5px;height:1.4px;background:#b5cea8;opacity:.75"></div><div class="a" style="left:949px;top:312px;width:7px;height:1.4px;background:#9cdcfe;opacity:.75"></div><div class="a" style="left:958px;top:312px;width:4px;height:1.4px;background:#b5cea8;opacity:.75"></div><div class="a" style="left:963px;top:312px;width:8px;height:1.4px;background:#b5cea8;opacity:.75"></div><div class="a" style="left:949px;top:315px;width:7px;height:1.4px;background:#9cdcfe;opacity:.75"></div><div class="a" style="left:958px;top:315px;width:5px;height:1.4px;background:#d4d4d4;opacity:.75"></div><div class="a" style="left:949px;top:317px;width:15px;height:1.4px;background:#9cdcfe;opacity:.75"></div><div class="a" style="left:966px;top:317px;width:14px;height:1.4px;background:#d4d4d4;opacity:.75"></div><div class="a" style="left:949px;top:320px;width:11px;height:1.4px;background:#9cdcfe;opacity:.75"></div><div class="a" style="left:962px;top:320px;width:11px;height:1.4px;background:#d4d4d4;opacity:.75"></div><div class="a" style="left:949px;top:322px;width:10px;height:1.4px;background:#9cdcfe;opacity:.75"></div><div class="a" style="left:961px;top:322px;width:1px;height:1.4px;background:#b5cea8;opacity:.75"></div><div class="a" style="left:963px;top:322px;width:3px;height:1.4px;background:#b5cea8;opacity:.75"></div><div class="a" style="left:967px;top:322px;width:4px;height:1.4px;background:#b5cea8;opacity:.75"></div><div class="a" style="left:972px;top:322px;width:7px;height:1.4px;background:#d4d4d4;opacity:.75"></div><div class="a" style="left:980px;top:322px;width:2px;height:1.4px;background:#b5cea8;opacity:.75"></div><div class="a" style="left:983px;top:322px;width:2px;height:1.4px;background:#b5cea8;opacity:.75"></div><div class="a" style="left:986px;top:322px;width:5px;height:1.4px;background:#b5cea8;opacity:.75"></div><div class="a" style="left:949px;top:324px;width:9px;height:1.4px;background:#9cdcfe;opacity:.75"></div><div class="a" style="left:960px;top:324px;width:7px;height:1.4px;background:#d4d4d4;opacity:.75"></div><div class="a" style="left:968px;top:324px;width:4px;height:1.4px;background:#b5cea8;opacity:.75"></div><div class="a" style="left:973px;top:324px;width:5px;height:1.4px;background:#d4d4d4;opacity:.75"></div><div class="a" style="left:945px;top:327px;width:1px;height:1.4px;background:#ffd700;opacity:.75"></div><div class="a" style="left:945px;top:332px;width:10px;height:1.4px;background:#569cd6;opacity:.75"></div><div class="a" style="left:956px;top:332px;width:7px;height:1.4px;background:#569cd6;opacity:.75"></div><div class="a" style="left:964px;top:332px;width:1px;height:1.4px;background:#ffd700;opacity:.75"></div><div class="a" style="left:949px;top:334px;width:4px;height:1.4px;background:#d7ba7d;opacity:.75"></div><div class="a" style="left:954px;top:334px;width:1px;height:1.4px;background:#ffd700;opacity:.75"></div><div class="a" style="left:953px;top:336px;width:7px;height:1.4px;background:#9cdcfe;opacity:.75"></div><div class="a" style="left:962px;top:336px;width:2px;height:1.4px;background:#b5cea8;opacity:.75"></div><div class="a" style="left:953px;top:339px;width:9px;height:1.4px;background:#9cdcfe;opacity:.75"></div><div class="a" style="left:964px;top:339px;width:18px;height:1.4px;background:#d4d4d4;opacity:.75"></div><div class="a" style="left:949px;top:341px;width:1px;height:1.4px;background:#ffd700;opacity:.75"></div><div class="a" style="left:949px;top:344px;width:2px;height:1.4px;background:#d7ba7d;opacity:.75"></div><div class="a" style="left:952px;top:344px;width:1px;height:1.4px;background:#ffd700;opacity:.75"></div><div class="a" style="left:953px;top:346px;width:7px;height:1.4px;background:#9cdcfe;opacity:.75"></div><div class="a" style="left:962px;top:346px;width:2px;height:1.4px;background:#b5cea8;opacity:.75"></div><div class="a" style="left:953px;top:348px;width:9px;height:1.4px;background:#9cdcfe;opacity:.75"></div><div class="a" style="left:964px;top:348px;width:14px;height:1.4px;background:#d4d4d4;opacity:.75"></div><div class="a" style="left:949px;top:351px;width:1px;height:1.4px;background:#ffd700;opacity:.75"></div><div class="a" style="left:945px;top:353px;width:1px;height:1.4px;background:#ffd700;opacity:.75"></div><div class="a" style="left:945px;top:358px;width:12px;height:1.4px;background:#d7ba7d;opacity:.75"></div><div class="a" style="left:958px;top:358px;width:2px;height:1.4px;background:#d7ba7d;opacity:.75"></div><div class="a" style="left:961px;top:358px;width:1px;height:1.4px;background:#ffd700;opacity:.75"></div><div class="a" style="left:949px;top:360px;width:5px;height:1.4px;background:#9cdcfe;opacity:.75"></div><div class="a" style="left:956px;top:360px;width:8px;height:1.4px;background:#d4d4d4;opacity:.75"></div><div class="a" style="left:949px;top:363px;width:13px;height:1.4px;background:#9cdcfe;opacity:.75"></div><div class="a" style="left:964px;top:363px;width:8px;height:1.4px;background:#b5cea8;opacity:.75"></div><div class="a" style="left:945px;top:365px;width:1px;height:1.4px;background:#ffd700;opacity:.75"></div><div class="a" style="left:945px;top:370px;width:12px;height:1.4px;background:#d7ba7d;opacity:.75"></div><div class="a" style="left:958px;top:370px;width:1px;height:1.4px;background:#d7ba7d;opacity:.75"></div><div class="a" style="left:960px;top:370px;width:1px;height:1.4px;background:#ffd700;opacity:.75"></div><div class="a" style="left:949px;top:372px;width:5px;height:1.4px;background:#9cdcfe;opacity:.75"></div><div class="a" style="left:956px;top:372px;width:8px;height:1.4px;background:#d4d4d4;opacity:.75"></div><div class="a" style="left:949px;top:375px;width:9px;height:1.4px;background:#9cdcfe;opacity:.75"></div><div class="a" style="left:960px;top:375px;width:7px;height:1.4px;background:#b5cea8;opacity:.75"></div><div class="a" style="left:945px;top:377px;width:1px;height:1.4px;background:#ffd700;opacity:.75"></div><div class="a" style="left:945px;top:382px;width:11px;height:1.4px;background:#d7ba7d;opacity:.75"></div><div class="a" style="left:957px;top:382px;width:1px;height:1.4px;background:#ffd700;opacity:.75"></div><div class="a" style="left:949px;top:384px;width:10px;height:1.4px;background:#9cdcfe;opacity:.75"></div><div class="a" style="left:961px;top:384px;width:8px;height:1.4px;background:#d4d4d4;opacity:.75"></div><div class="a" style="left:949px;top:387px;width:5px;height:1.4px;background:#9cdcfe;opacity:.75"></div><div class="a" style="left:956px;top:387px;width:5px;height:1.4px;background:#d4d4d4;opacity:.75"></div>
<div class="a" style="left:939px;top:110px;width:2.2px;height:275px;background:#1b81c0;"></div>
<div class="a" style="left:1033px;top:110px;width:1px;height:764px;background:#2e2e2e;"></div>
<div class="a" style="left:1034px;top:110px;width:5.5px;height:617px;background:#1e5f7c;"></div>
<div class="a" style="left:1034px;top:110px;width:16px;height:2px;background:#9a9a9a;"></div>
<div class="a" style="left:1034px;top:110px;width:5.5px;height:2px;background:#8fb3c3;"></div>
<div class="a" style="left:782.5px;top:110.5px;width:137.5px;height:37px;background:#252526;border:1px solid #4a4a4a;border-radius:8px"></div>
<div class="a" style="left:788px;top:116px;width:44px;height:27px;background:#0e639c;border-radius:5px"></div>
<div class="t" style="left:795.8px;top:123.16px;font-size:12.8px;color:#ffffff;font-weight:bold;font-style:normal;font-family:'Liberation Sans', sans-serif;letter-spacing:0px;transform:scaleX(0.9170);transform-origin:0 0;">Keep</div>
<div class="t" style="left:843.8px;top:123.16px;font-size:12.8px;color:#cccccc;font-weight:normal;font-style:normal;font-family:'Liberation Sans', sans-serif;letter-spacing:0px;transform:scaleX(1.0264);transform-origin:0 0;">Undo</div>
<svg style="left:891.5px;top:119.5px;" width="16" height="18" viewBox="0 0 14 17" fill="none" stroke="#cccccc" stroke-width="1.3" stroke-linecap="round" stroke-linejoin="round"><path d="M2.5 1h6l3.5 3.5v10.2c0 .7-.6 1.3-1.3 1.3H2.5c-.7 0-1.3-.6-1.3-1.3V2.3c0-.7.6-1.3 1.3-1.3z"/><path d="M6.8 4.8v5M4.3 7.3h5M4.3 12.3h5"/></svg>
<div class="a" style="left:753.6px;top:807.4px;width:267.4px;height:37px;background:#252526;border:1px solid #4a4a4a;border-radius:8px"></div>
<div class="a" style="left:759px;top:813px;width:44px;height:26px;background:#0e639c;border-radius:5px"></div>
<div class="t" style="left:766.6px;top:819.16px;font-size:12.8px;color:#ffffff;font-weight:bold;font-style:normal;font-family:'Liberation Sans', sans-serif;letter-spacing:0px;transform:scaleX(0.9074);transform-origin:0 0;">Keep</div>
<div class="t" style="left:814.4px;top:819.16px;font-size:12.8px;color:#cccccc;font-weight:normal;font-style:normal;font-family:'Liberation Sans', sans-serif;letter-spacing:0px;transform:scaleX(1.0329);transform-origin:0 0;">Undo</div>
<svg style="left:862.5px;top:817.5px;" width="16" height="18" viewBox="0 0 14 17" fill="none" stroke="#cccccc" stroke-width="1.3" stroke-linecap="round" stroke-linejoin="round"><path d="M2.5 1h6l3.5 3.5v10.2c0 .7-.6 1.3-1.3 1.3H2.5c-.7 0-1.3-.6-1.3-1.3V2.3c0-.7.6-1.3 1.3-1.3z"/><path d="M6.8 4.8v5M4.3 7.3h5M4.3 12.3h5"/></svg>
<div class="a" style="left:895px;top:816px;width:1px;height:18px;background:#5a5a5a;"></div>
<div class="t" style="left:912.4px;top:819.16px;font-size:12.8px;color:#cccccc;font-weight:normal;font-style:normal;font-family:'Liberation Sans', sans-serif;letter-spacing:0px;transform:scaleX(1.0178);transform-origin:0 0;">2 of 3</div>
<svg style="left:963px;top:817px;" width="17" height="17" viewBox="0 0 16 16" fill="none" stroke="#cccccc" stroke-width="1.3" stroke-linecap="round" stroke-linejoin="round"><path d="M8 14.5V1.8M2.5 7 8 1.5 13.5 7"/></svg>
<svg style="left:994px;top:817px;" width="17" height="17" viewBox="0 0 16 16" fill="none" stroke="#cccccc" stroke-width="1.3" stroke-linecap="round" stroke-linejoin="round"><path d="M8 1.5v12.7M2.5 9 8 14.5 13.5 9"/></svg>
<div class="a" style="left:1050px;top:42px;width:550px;height:832px;background:#252526;"></div>
<div class="t" style="left:1074px;top:57.96px;font-size:12.8px;color:#e7e7e7;font-weight:normal;font-style:normal;font-family:'Liberation Sans', sans-serif;letter-spacing:0px;transform:scaleX(0.9354);transform-origin:0 0;">CHAT</div>
<div class="a" style="left:1072px;top:75.8px;width:36px;height:1.5px;background:#e7e7e7;"></div>
<svg style="left:1406px;top:54px;" width="20" height="18" viewBox="0 0 16 15" fill="none" stroke="#cccccc" stroke-width="1.1" stroke-linecap="round" stroke-linejoin="round"><path d="M2.6 1.2h10.8c.8 0 1.4.6 1.4 1.4v6.6c0 .8-.6 1.4-1.4 1.4H7l-3.2 3v-3H2.6c-.8 0-1.4-.6-1.4-1.4V2.6c0-.8.6-1.4 1.4-1.4z"/></svg>
<svg style="left:1430px;top:58px;" width="11" height="7" viewBox="0 0 11 7" fill="none" stroke="#cccccc" stroke-width="1.1" stroke-linecap="round" stroke-linejoin="round"><path d="M1 1.2 5.5 5.6 10 1.2"/></svg>
<svg style="left:1449px;top:49px;" width="27" height="27" viewBox="0 0 40 40" fill="none" stroke="#cccccc" stroke-width="1.9" stroke-linecap="round" stroke-linejoin="round"><path d="M16.91 13.26 L17.19 8.94 L22.81 8.94 L23.09 13.26 L24.47 14.05 L28.34 12.14 L31.15 17.00 L27.56 19.41 L27.56 20.99 L31.15 23.40 L28.34 28.26 L24.47 26.35 L23.09 27.14 L22.81 31.46 L17.19 31.46 L16.91 27.14 L15.53 26.35 L11.66 28.26 L8.85 23.40 L12.44 20.99 L12.44 19.41 L8.85 17.00 L11.66 12.14 L15.53 14.05Z"/><circle cx="20" cy="20.2" r="3.3"/></svg>
<svg style="left:0;top:0" width="1" height="1"><circle cx="1489" cy="62.5" r="1.6" fill="#cccccc"/><circle cx="1494.2" cy="62.5" r="1.6" fill="#cccccc"/><circle cx="1499.4" cy="62.5" r="1.6" fill="#cccccc"/></svg>
<div class="a" style="left:1517px;top:53px;width:1px;height:20px;background:#5a5a5a;"></div>
<svg style="left:1532px;top:54px;" width="17" height="17" viewBox="0 0 16 16" fill="none" stroke="#cccccc" stroke-width="1.2" stroke-linecap="round" stroke-linejoin="round"><path d="M1.2 5V2.4c0-.7.5-1.2 1.2-1.2H5M11 1.2h2.6c.7 0 1.2.5 1.2 1.2V5M14.8 11v2.6c0 .7-.5 1.2-1.2 1.2H11M5 14.8H2.4c-.7 0-1.2-.5-1.2-1.2V11"/></svg>
<svg style="left:1566px;top:57px;" width="12" height="12" viewBox="0 0 12 12" fill="none" stroke="#cccccc" stroke-width="1.2" stroke-linecap="round" stroke-linejoin="round"><path d="M.5 .5 11.5 11.5M11.5 .5 .5 11.5"/></svg>
<svg style="left:1074px;top:91px;" width="17" height="14" viewBox="0 0 17 14" fill="none" stroke="#cccccc" stroke-width="1.2" stroke-linecap="round" stroke-linejoin="round"><path d="M16 7H1.5M7 1.2 1.2 7 7 12.8"/></svg>
<div class="t" style="left:1099.5px;top:91.86px;font-size:12.8px;color:#e0e0e0;font-weight:bold;font-style:normal;font-family:'Liberation Sans', sans-serif;letter-spacing:0px;transform:scaleX(0.9725);transform-origin:0 0;">RECIPE LIST APP DEVELOPMENT WITH HTML, CSS, JAVASCRIPT</div>
<svg style="left:1563px;top:89px;" width="18" height="17" viewBox="0 0 16 16" fill="none" stroke="#cccccc" stroke-width="1.2" stroke-linecap="round" stroke-linejoin="round"><rect x="1" y="1" width="14" height="14" rx="2"/><path d="M9 1v14"/></svg>
<div class="a" style="left:1092px;top:133px;width:488px;height:113px;background:#26333f;border-radius:12.5px"></div>
<div class="t" style="left:1106.3px;top:147.22px;font-size:15.1px;color:#e6e6e6;font-weight:normal;font-style:normal;font-family:'Liberation Sans', sans-serif;letter-spacing:0px;transform:scaleX(0.9933);transform-origin:0 0;">Create a recipe list app with HTML, CSS, and JavaScript in separate</div>
<div class="t" style="left:1106.3px;top:170.62px;font-size:15.1px;color:#e6e6e6;font-weight:normal;font-style:normal;font-family:'Liberation Sans', sans-serif;letter-spacing:0px;transform:scaleX(1.0318);transform-origin:0 0;">files. Include an input field to add recipes with a name and</div>
<div class="t" style="left:1106.3px;top:194.02px;font-size:15.1px;color:#e6e6e6;font-weight:normal;font-style:normal;font-family:'Liberation Sans', sans-serif;letter-spacing:0px;transform:scaleX(1.0374);transform-origin:0 0;">description, a list to display them, and a delete button for each</div>
<div class="t" style="left:1106.3px;top:217.42px;font-size:15.1px;color:#e6e6e6;font-weight:normal;font-style:normal;font-family:'Liberation Sans', sans-serif;letter-spacing:0px;transform:scaleX(1.0286);transform-origin:0 0;">item. Use modern styling. Add some sample recipes to the list.</div>
<div class="t" style="left:1069.6px;top:280.85px;font-size:14.0px;color:#cccccc;font-weight:normal;font-style:normal;font-family:'Liberation Sans', sans-serif;letter-spacing:0px;transform:scaleX(0.9716);transform-origin:0 0;">Created</div>
<div class="t" style="left:1123.3px;top:280.85px;font-size:14.0px;color:#8e8e8e;font-weight:normal;font-style:normal;font-family:'Liberation Sans', sans-serif;letter-spacing:0px;transform:scaleX(0.9728);transform-origin:0 0;">HTML, CSS, and JavaScript files for app</div>
<div class="t" style="left:1069.6px;top:327.85px;font-size:14.0px;color:#cccccc;font-weight:normal;font-style:normal;font-family:'Liberation Sans', sans-serif;letter-spacing:0px;transform:scaleX(0.9716);transform-origin:0 0;">Created</div>
<div class="a" style="left:1124px;top:324.3px;width:88.5px;height:20px;background:transparent;border:1px solid #3e3e3e;border-radius:4px"></div>
<svg style="left:1125px;top:325px;" width="20" height="20" viewBox="0 0 20 20" fill="none" stroke="#e8702a" stroke-width="1.5" stroke-linecap="round" stroke-linejoin="round"><path d="M8.6 6 6.6 9 8.6 12M11.2 6 13.2 9 11.2 12"/></svg>
<div class="t" style="left:1144.3px;top:327.85px;font-size:14.0px;color:#cccccc;font-weight:normal;font-style:normal;font-family:'Liberation Sans', sans-serif;letter-spacing:0px;transform:scaleX(0.9512);transform-origin:0 0;">index.html</div>
<div class="t" style="left:1069.6px;top:372.75px;font-size:14.0px;color:#cccccc;font-weight:normal;font-style:normal;font-family:'Liberation Sans', sans-serif;letter-spacing:0px;transform:scaleX(0.9716);transform-origin:0 0;">Created</div>
<div class="a" style="left:1124px;top:369.5px;width:80.5px;height:20px;background:transparent;border:1px solid #3e3e3e;border-radius:4px"></div>
<div class="t" style="left:1130.5px;top:375.54px;font-size:10px;color:#519aba;font-weight:bold;font-style:normal;font-family:'Liberation Sans', sans-serif;letter-spacing:0px;">#</div>
<div class="t" style="left:1144px;top:372.75px;font-size:14.0px;color:#cccccc;font-weight:normal;font-style:normal;font-family:'Liberation Sans', sans-serif;letter-spacing:0px;transform:scaleX(0.8684);transform-origin:0 0;">styles.css</div>
<div class="t" style="left:1069.7px;top:418.15px;font-size:14.0px;color:#cccccc;font-weight:normal;font-style:normal;font-family:'Liberation Sans', sans-serif;letter-spacing:0px;transform:scaleX(1.0295);transform-origin:0 0;">Working</div>
<div class="a" style="left:1069px;top:441.7px;width:511px;height:85.6px;background:transparent;border:1px solid #3a3a3a;border-radius:6px"></div>
<svg style="left:1080px;top:458px;" width="15" height="15" viewBox="0 0 14 14" fill="none" stroke="#b8b8b8" stroke-width="1.1" stroke-linecap="round" stroke-linejoin="round"><path d="M9.5 1.8 12.2 4.5 4.8 11.9 1.5 12.5 2.1 9.2z"/><path d="M8.3 3l2.7 2.7"/></svg>
<div class="t" style="left:1102.7px;top:459.15px;font-size:14.0px;color:#cccccc;font-weight:normal;font-style:normal;font-family:'Liberation Sans', sans-serif;letter-spacing:0px;transform:scaleX(0.9837);transform-origin:0 0;">Created</div>
<div class="a" style="left:1157.3px;top:455.4px;width:62px;height:20px;background:transparent;border:1px solid #3e3e3e;border-radius:4px"></div>
<div class="t" style="left:1164.5px;top:462.65px;font-size:7.5px;color:#cbcb41;font-weight:bold;font-style:normal;font-family:'Liberation Sans', sans-serif;letter-spacing:-0.4px;">JS</div>
<div class="t" style="left:1177.7px;top:459.15px;font-size:14.0px;color:#cccccc;font-weight:normal;font-style:normal;font-family:'Liberation Sans', sans-serif;letter-spacing:0px;transform:scaleX(0.9020);transform-origin:0 0;">app.js</div>
<div class="a" style="left:1086.3px;top:477.8px;width:1.2px;height:12.6px;background:#5a5a5a;"></div>
<div class="a" style="left:1082.8px;top:498px;width:8px;height:8px;background:#a8a8a8;border-radius:50%"></div>
<div class="t" style="left:1103.4px;top:496.85px;font-size:14.0px;color:#cccccc;font-weight:normal;font-style:normal;font-family:'Liberation Sans', sans-serif;letter-spacing:0px;transform:scaleX(0.9954);transform-origin:0 0;">Loading</div>
<div class="a" style="left:1064px;top:677.2px;width:521px;height:40px;background:#1e1e1e;border-radius:8px 8px 0 0"></div>
<svg style="left:1078px;top:690px;" width="10" height="14" viewBox="0 0 10 14" fill="none" stroke="#cccccc" stroke-width="1.2" stroke-linecap="round" stroke-linejoin="round"><path d="M2 1.5 7.5 7 2 12.5"/></svg>
<div class="t" style="left:1095.9px;top:689.85px;font-size:14.0px;color:#cccccc;font-weight:normal;font-style:normal;font-family:'Liberation Sans', sans-serif;letter-spacing:0px;transform:scaleX(1.0044);transform-origin:0 0;">3 files changed</div>
<div class="t" style="left:1200px;top:689.85px;font-size:14.0px;color:#57c05a;font-weight:normal;font-style:normal;font-family:'Liberation Sans', sans-serif;letter-spacing:0px;transform:scaleX(0.8559);transform-origin:0 0;">+212</div>
<div class="t" style="left:1233px;top:689.85px;font-size:14.0px;color:#f05f5f;font-weight:normal;font-style:normal;font-family:'Liberation Sans', sans-serif;letter-spacing:0px;transform:scaleX(0.9074);transform-origin:0 0;">-3</div>
<div class="a" style="left:1443px;top:683px;width:45px;height:25.8px;background:#0e639c;border-radius:4px"></div>
<div class="t" style="left:1451px;top:689.16px;font-size:12.8px;color:#ffffff;font-weight:bold;font-style:normal;font-family:'Liberation Sans', sans-serif;letter-spacing:0px;transform:scaleX(0.9266);transform-origin:0 0;">Keep</div>
<div class="a" style="left:1495px;top:683px;width:49px;height:25.8px;background:#2a2d2e;border-radius:4px"></div>
<div class="t" style="left:1503.8px;top:689.16px;font-size:12.8px;color:#cccccc;font-weight:normal;font-style:normal;font-family:'Liberation Sans', sans-serif;letter-spacing:0px;transform:scaleX(1.0362);transform-origin:0 0;">Undo</div>
<div class="a" style="left:1551px;top:683px;width:26px;height:26px;background:#2a2d2e;border-radius:4px"></div>
<svg style="left:1550px;top:680px;" width="30" height="30" viewBox="0 0 30 30" fill="none" stroke="#cccccc" stroke-width="1.3" stroke-linecap="round" stroke-linejoin="round"><path d="M8.7 6.3H15.3L19.7 10.7V20.3Q19.7 22.3 17.7 22.3H8.7Q6.7 22.3 6.7 20.3V8.3Q6.7 6.3 8.7 6.3Z"/><path d="M13.3 9.7V15.7M10.3 12.7H16.3M10.3 18.3H16.3"/><path d="M22.7 12.3V20Q22.7 25 17.7 25H10"/></svg>
<div class="a" style="left:1064px;top:714px;width:521px;height:124px;background:#3c3c3c;border:1px solid #007acc;border-radius:0 0 8px 8px"></div>
<div class="a" style="left:1073.4px;top:721.9px;width:100.4px;height:22.3px;background:transparent;border:1px dashed #5c5c5c;border-radius:4px"></div>
<svg style="left:1078.5px;top:727px;" width="12" height="12" viewBox="0 0 12 12" fill="none" stroke="#bdbdbd" stroke-width="1.2" stroke-linecap="round" stroke-linejoin="round"><path d="M6 .5v11M.5 6h11"/></svg>
<div class="t" style="left:1098.5px;top:726.13px;font-size:14.5px;color:#519aba;font-weight:bold;font-style:normal;font-family:'Liberation Sans', sans-serif;letter-spacing:0px;transform:scaleX(1.2627);transform-origin:0 0;">#</div>
<div class="t" style="left:1117.9px;top:727.46px;font-size:13.4px;color:#cccccc;font-weight:normal;font-style:italic;font-family:'Liberation Sans', sans-serif;letter-spacing:0px;transform:scaleX(0.8614);transform-origin:0 0;">styles.css</div>
<div class="t" style="left:1077.9px;top:764.12px;font-size:15.1px;color:#9d9d9d;font-weight:normal;font-style:normal;font-family:'Liberation Sans', sans-serif;letter-spacing:0px;transform:scaleX(1.0330);transform-origin:0 0;">Describe what to build</div>
<svg style="left:1077.5px;top:808px;" width="15" height="15" viewBox="0 0 14 14" fill="none" stroke="#cccccc" stroke-width="1.3" stroke-linecap="round" stroke-linejoin="round"><path d="M7 .5v13M.5 7h13"/></svg>
<svg style="left:1100px;top:800px;" width="40" height="30" viewBox="0 0 40 30" fill="none" stroke="#cccccc" stroke-width="1.25" stroke-linecap="round" stroke-linejoin="round"><path d="M18.5 10H16.6L12.4 15.9 16.6 21.9H17.4M20.7 21.9H22.5L26.6 15.9 22.5 10H21.7M21.3 10 18.1 21.9"/></svg>
<div class="t" style="left:1134px;top:808.75px;font-size:14.0px;color:#cccccc;font-weight:normal;font-style:normal;font-family:'Liberation Sans', sans-serif;letter-spacing:0px;transform:scaleX(0.9482);transform-origin:0 0;">Agent</div>
<svg style="left:1175.5px;top:813px;" width="9" height="6" viewBox="0 0 9 6" fill="none" stroke="#cccccc" stroke-width="1.1" stroke-linecap="round" stroke-linejoin="round"><path d="M.8 .8 4.5 4.6 8.2 .8"/></svg>
<div class="t" style="left:1207.6px;top:808.75px;font-size:14.0px;color:#cccccc;font-weight:normal;font-style:normal;font-family:'Liberation Sans', sans-serif;letter-spacing:0px;transform:scaleX(0.9069);transform-origin:0 0;">Claude Opus 4.6</div>
<svg style="left:1309px;top:813px;" width="9" height="6" viewBox="0 0 9 6" fill="none" stroke="#cccccc" stroke-width="1.1" stroke-linecap="round" stroke-linejoin="round"><path d="M.8 .8 4.5 4.6 8.2 .8"/></svg>
<svg style="left:1300px;top:800px" width="80" height="30" viewBox="0 0 80 30" fill="none" stroke="#cccccc" stroke-width="1.3" stroke-linecap="round"><path d="M38.7 12.25H45.9M50.5 12.25H52.9M38.7 20.5H41M45.6 20.5H52.9"/><circle cx="48.25" cy="12.25" r="2.2"/><circle cx="43.25" cy="20.5" r="2.2"/></svg>
<svg style="left:1540px;top:800px" width="50" height="70" viewBox="0 0 50 70"><circle cx="23.7" cy="16.5" r="7.6" fill="none" stroke="#cccccc" stroke-width="1.4"/><rect x="19.9" y="12.8" width="7.7" height="7.2" fill="#d0d0d0"/></svg>
<svg style="left:1072px;top:844px;" width="30" height="22" viewBox="0 0 30 22" fill="none" stroke="#cccccc" stroke-width="1.5" stroke-linecap="round" stroke-linejoin="round"><rect x="6.9" y="5.4" width="11.1" height="8.4" rx="1.6"/><path d="M10.5 14.2V16.2M14.6 14.2V16.2M8.4 16.9H16.6"/></svg>
<div class="t" style="left:1099.7px;top:849.15px;font-size:14.0px;color:#cccccc;font-weight:normal;font-style:normal;font-family:'Liberation Sans', sans-serif;letter-spacing:0px;transform:scaleX(0.8695);transform-origin:0 0;">Local</div>
<svg style="left:1135.5px;top:853px;" width="9" height="6" viewBox="0 0 9 6" fill="none" stroke="#cccccc" stroke-width="1.1" stroke-linecap="round" stroke-linejoin="round"><path d="M.8 .8 4.5 4.6 8.2 .8"/></svg>
<svg style="left:1160px;top:844px;" width="30" height="22" viewBox="0 0 30 22" fill="none" stroke="#cccccc" stroke-width="1.4" stroke-linecap="round" stroke-linejoin="round"><path d="M12 5.4Q9.5 7 6.6 7.3V10.5Q6.6 14.8 12 16.6Q17.4 14.8 17.4 10.5V7.3Q14.5 7 12 5.4Z"/><circle cx="12" cy="10.2" r="1.1" fill="#cccccc" stroke="none"/><path d="M12 10.5V12.5"/></svg>
<div class="t" style="left:1187.3px;top:849.15px;font-size:14.0px;color:#cccccc;font-weight:normal;font-style:normal;font-family:'Liberation Sans', sans-serif;letter-spacing:0px;transform:scaleX(0.9368);transform-origin:0 0;">Default Approvals</div>
<svg style="left:1297.5px;top:853px;" width="9" height="6" viewBox="0 0 9 6" fill="none" stroke="#cccccc" stroke-width="1.1" stroke-linecap="round" stroke-linejoin="round"><path d="M.8 .8 4.5 4.6 8.2 .8"/></svg>
<svg style="left:1540px;top:800px" width="50" height="70" viewBox="0 0 50 70" fill="none" stroke-width="1.5"><circle cx="23.7" cy="55.2" r="6.8" stroke="#555555"/><path d="M23.7 48.4A6.8 6.8 0 0 1 27.6 60.8" stroke="#c8c8c8"/></svg>
<div class="a" style="left:0px;top:874px;width:1600px;height:26px;background:#007acc;"></div>
<svg style="left:14px;top:878px;" width="16" height="17" viewBox="0 0 16 17" fill="none" stroke="#ffffff" stroke-width="1.6" stroke-linecap="round" stroke-linejoin="round"><path d="M1 5.3 7.3 10.6 1 15.5M13.6 .5 8 5.8 13.6 10.6"/></svg>
<svg style="left:51px;top:878px;" width="18" height="18" viewBox="0 0 18 18" fill="none" stroke="#ffffff" stroke-width="1.6" stroke-linecap="round" stroke-linejoin="round"><circle cx="9" cy="8.6" r="7.6"/><path d="M6 5.6 12 11.6M12 5.6 6 11.6"/></svg>
<div class="t" style="left:73.6px;top:881.15px;font-size:14.0px;color:#ffffff;font-weight:normal;font-style:normal;font-family:'Liberation Sans', sans-serif;letter-spacing:0px;transform:scaleX(0.9363);transform-origin:0 0;">0</div>
<svg style="left:85px;top:877px;" width="19" height="18" viewBox="0 0 19 18" fill="none" stroke="#ffffff" stroke-width="1.6" stroke-linecap="round" stroke-linejoin="round"><path d="M9.5 1.8 17.6 16H1.4z"/><path d="M9.5 6.5v5M9.5 13.3v.6"/></svg>
<div class="t" style="left:109px;top:881.15px;font-size:14.0px;color:#ffffff;font-weight:normal;font-style:normal;font-family:'Liberation Sans', sans-serif;letter-spacing:0px;transform:scaleX(0.8850);transform-origin:0 0;">0</div>
<div class="t" style="left:1190px;top:881.15px;font-size:14.0px;color:#ffffff;font-weight:normal;font-style:normal;font-family:'Liberation Sans', sans-serif;letter-spacing:0px;transform:scaleX(0.9495);transform-origin:0 0;">Ln 1, Col 1</div>
<div class="t" style="left:1275px;top:881.15px;font-size:14.0px;color:#ffffff;font-weight:normal;font-style:normal;font-family:'Liberation Sans', sans-serif;letter-spacing:0px;transform:scaleX(0.9283);transform-origin:0 0;">Spaces: 4</div>
<div class="t" style="left:1352.7px;top:881.15px;font-size:14.0px;color:#ffffff;font-weight:normal;font-style:normal;font-family:'Liberation Sans', sans-serif;letter-spacing:0px;transform:scaleX(0.9402);transform-origin:0 0;">UTF-8</div>
<div class="t" style="left:1409.7px;top:881.15px;font-size:14.0px;color:#ffffff;font-weight:normal;font-style:normal;font-family:'Liberation Sans', sans-serif;letter-spacing:0px;transform:scaleX(0.8451);transform-origin:0 0;">CRLF</div>
<div class="t" style="left:1462px;top:881.15px;font-size:14.0px;color:#ffffff;font-weight:normal;font-style:normal;font-family:'Liberation Sans', sans-serif;letter-spacing:0px;transform:scaleX(1.2000);transform-origin:0 0;">{ }</div>
<div class="t" style="left:1486.6px;top:881.15px;font-size:14.0px;color:#ffffff;font-weight:normal;font-style:normal;font-family:'Liberation Sans', sans-serif;letter-spacing:0px;transform:scaleX(0.8195);transform-origin:0 0;">CSS</div>
<svg style="left:1520px;top:874px" width="80" height="26" viewBox="0 0 80 26"><g fill="none" stroke="#fff" stroke-width="2"><circle cx="14.8" cy="7.6" r="2.8"/><circle cx="22.5" cy="7.6" r="2.8"/></g><path d="M12 11.5C10 12.5 9.3 15 9.8 17 10.8 19.5 14 20.6 17.5 20.6V18.2C14.8 18.2 13.2 17.5 12.9 16 12.6 14.5 13 13.2 14.3 12.4Z" fill="#fff"/><circle cx="23.75" cy="17.25" r="5.6" fill="#fff"/><path d="M21.3 16.2Q22.5 14 25.5 15M26.2 18.3Q25 20.5 22 19.5" stroke="#007acc" stroke-width="1.1" fill="none"/><path d="M52.3 17.2V9.6Q52.3 4.6 58 4.6Q63.7 4.6 63.7 9.6V17.2L65.3 19H50.7Z" fill="none" stroke="#fff" stroke-width="1.3" stroke-linejoin="round"/><path d="M56.7 19.5Q58 21.5 59.3 19.5" fill="none" stroke="#fff" stroke-width="1.3"/></svg>
</body></html>
